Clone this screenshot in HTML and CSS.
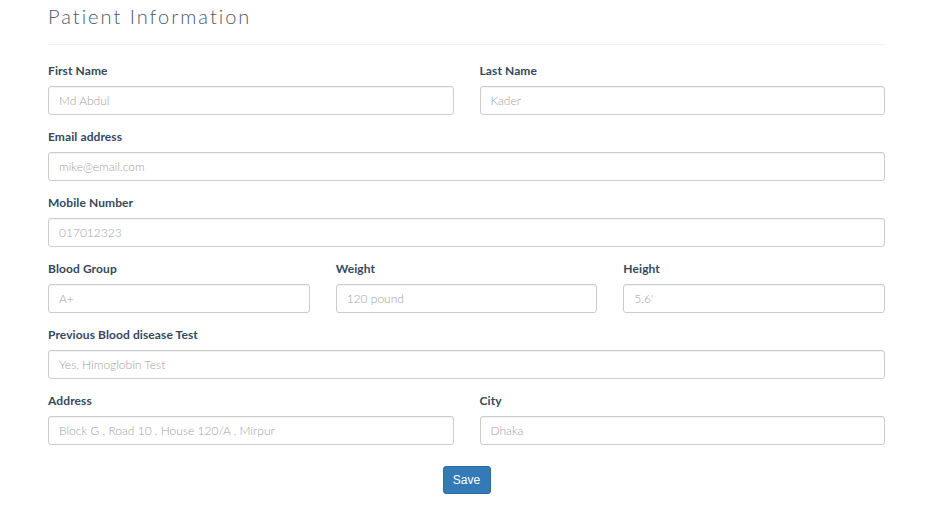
FILE: index.html
```html
<!DOCTYPE html>
<html>
<head>
<meta charset="utf-8">
<link rel="stylesheet" href="styles.css">
</head>
<body>
<div class="page">
  <h3 class="title">Patient Information</h3>
  <hr class="rule">
  <form class="form">
    <div class="row two">
      <div class="group"><label>First Name</label><input placeholder="Md Abdul"></div>
      <div class="group"><label>Last Name</label><input placeholder="Kader"></div>
    </div>
    <div class="group"><label>Email address</label><input placeholder="mike@email.com"></div>
    <div class="group"><label>Mobile Number</label><input placeholder="017012323"></div>
    <div class="row three">
      <div class="group"><label>Blood Group</label><input placeholder="A+"></div>
      <div class="group"><label>Weight</label><input placeholder="120 pound"></div>
      <div class="group"><label>Height</label><input placeholder="5.6'"></div>
    </div>
    <div class="group"><label>Previous Blood disease Test</label><input placeholder="Yes, Himoglobin Test"></div>
    <div class="row two">
      <div class="group"><label>Address</label><input placeholder="Block G , Road 10 , House 120/A , Mirpur"></div>
      <div class="group"><label>City</label><input placeholder="Dhaka"></div>
    </div>
    <div class="actions"><button type="button" class="btn">Save</button></div>
  </form>
</div>
</body>
</html>
```
FILE: styles.css
```css
* { box-sizing: border-box; }
html, body { margin: 0; padding: 0; background: #fff; }
body { font-family: Lato, "Open Sans", sans-serif; color: #2c3e50; }
.page { width: 837px; margin-left: 48px; }
.title {
  margin: 0;
  padding-top: 4px;
  height: 30px;
  font-size: 20px;
  line-height: 24px;
  font-weight: 300;
  letter-spacing: 2px;
  color: #4a5a6a;
}
.rule { border: 0; border-top: 1px solid #eee; margin: 14px 0 17px 0; height: 0; }
.row { display: grid; gap: 26px; }
.row.two { grid-template-columns: 1fr 1fr; }
.row.three { grid-template-columns: 1fr 1fr 1fr; }
.group { margin-bottom: 13px; }
label {
  display: block;
  height: 18px;
  line-height: 18px;
  margin-bottom: 6px;
  font-size: 12px;
  font-weight: 700;
  letter-spacing: 0.1px;
  color: #34495e;
}
input {
  display: block;
  width: 100%;
  height: 29px;
  padding: 0 10px;
  border: 1px solid #ccc;
  border-radius: 3px;
  font-family: Lato, "Open Sans", sans-serif;
  font-size: 12px;
  color: #555;
  background: #fff;
  box-shadow: inset 0 1px 1px rgba(0,0,0,0.05);
}
input::placeholder { color: #a0a0a0; font-weight: 300; }
.actions { display: flex; justify-content: center; padding-top: 8px; }
.btn {
  width: 48px;
  height: 28px;
  background: #337ab7;
  border: 1px solid #2e6da4;
  border-radius: 3px;
  color: #fff;
  font-family: "Liberation Sans", Arial, sans-serif;
  font-size: 12px;
  padding: 0;
}
```
